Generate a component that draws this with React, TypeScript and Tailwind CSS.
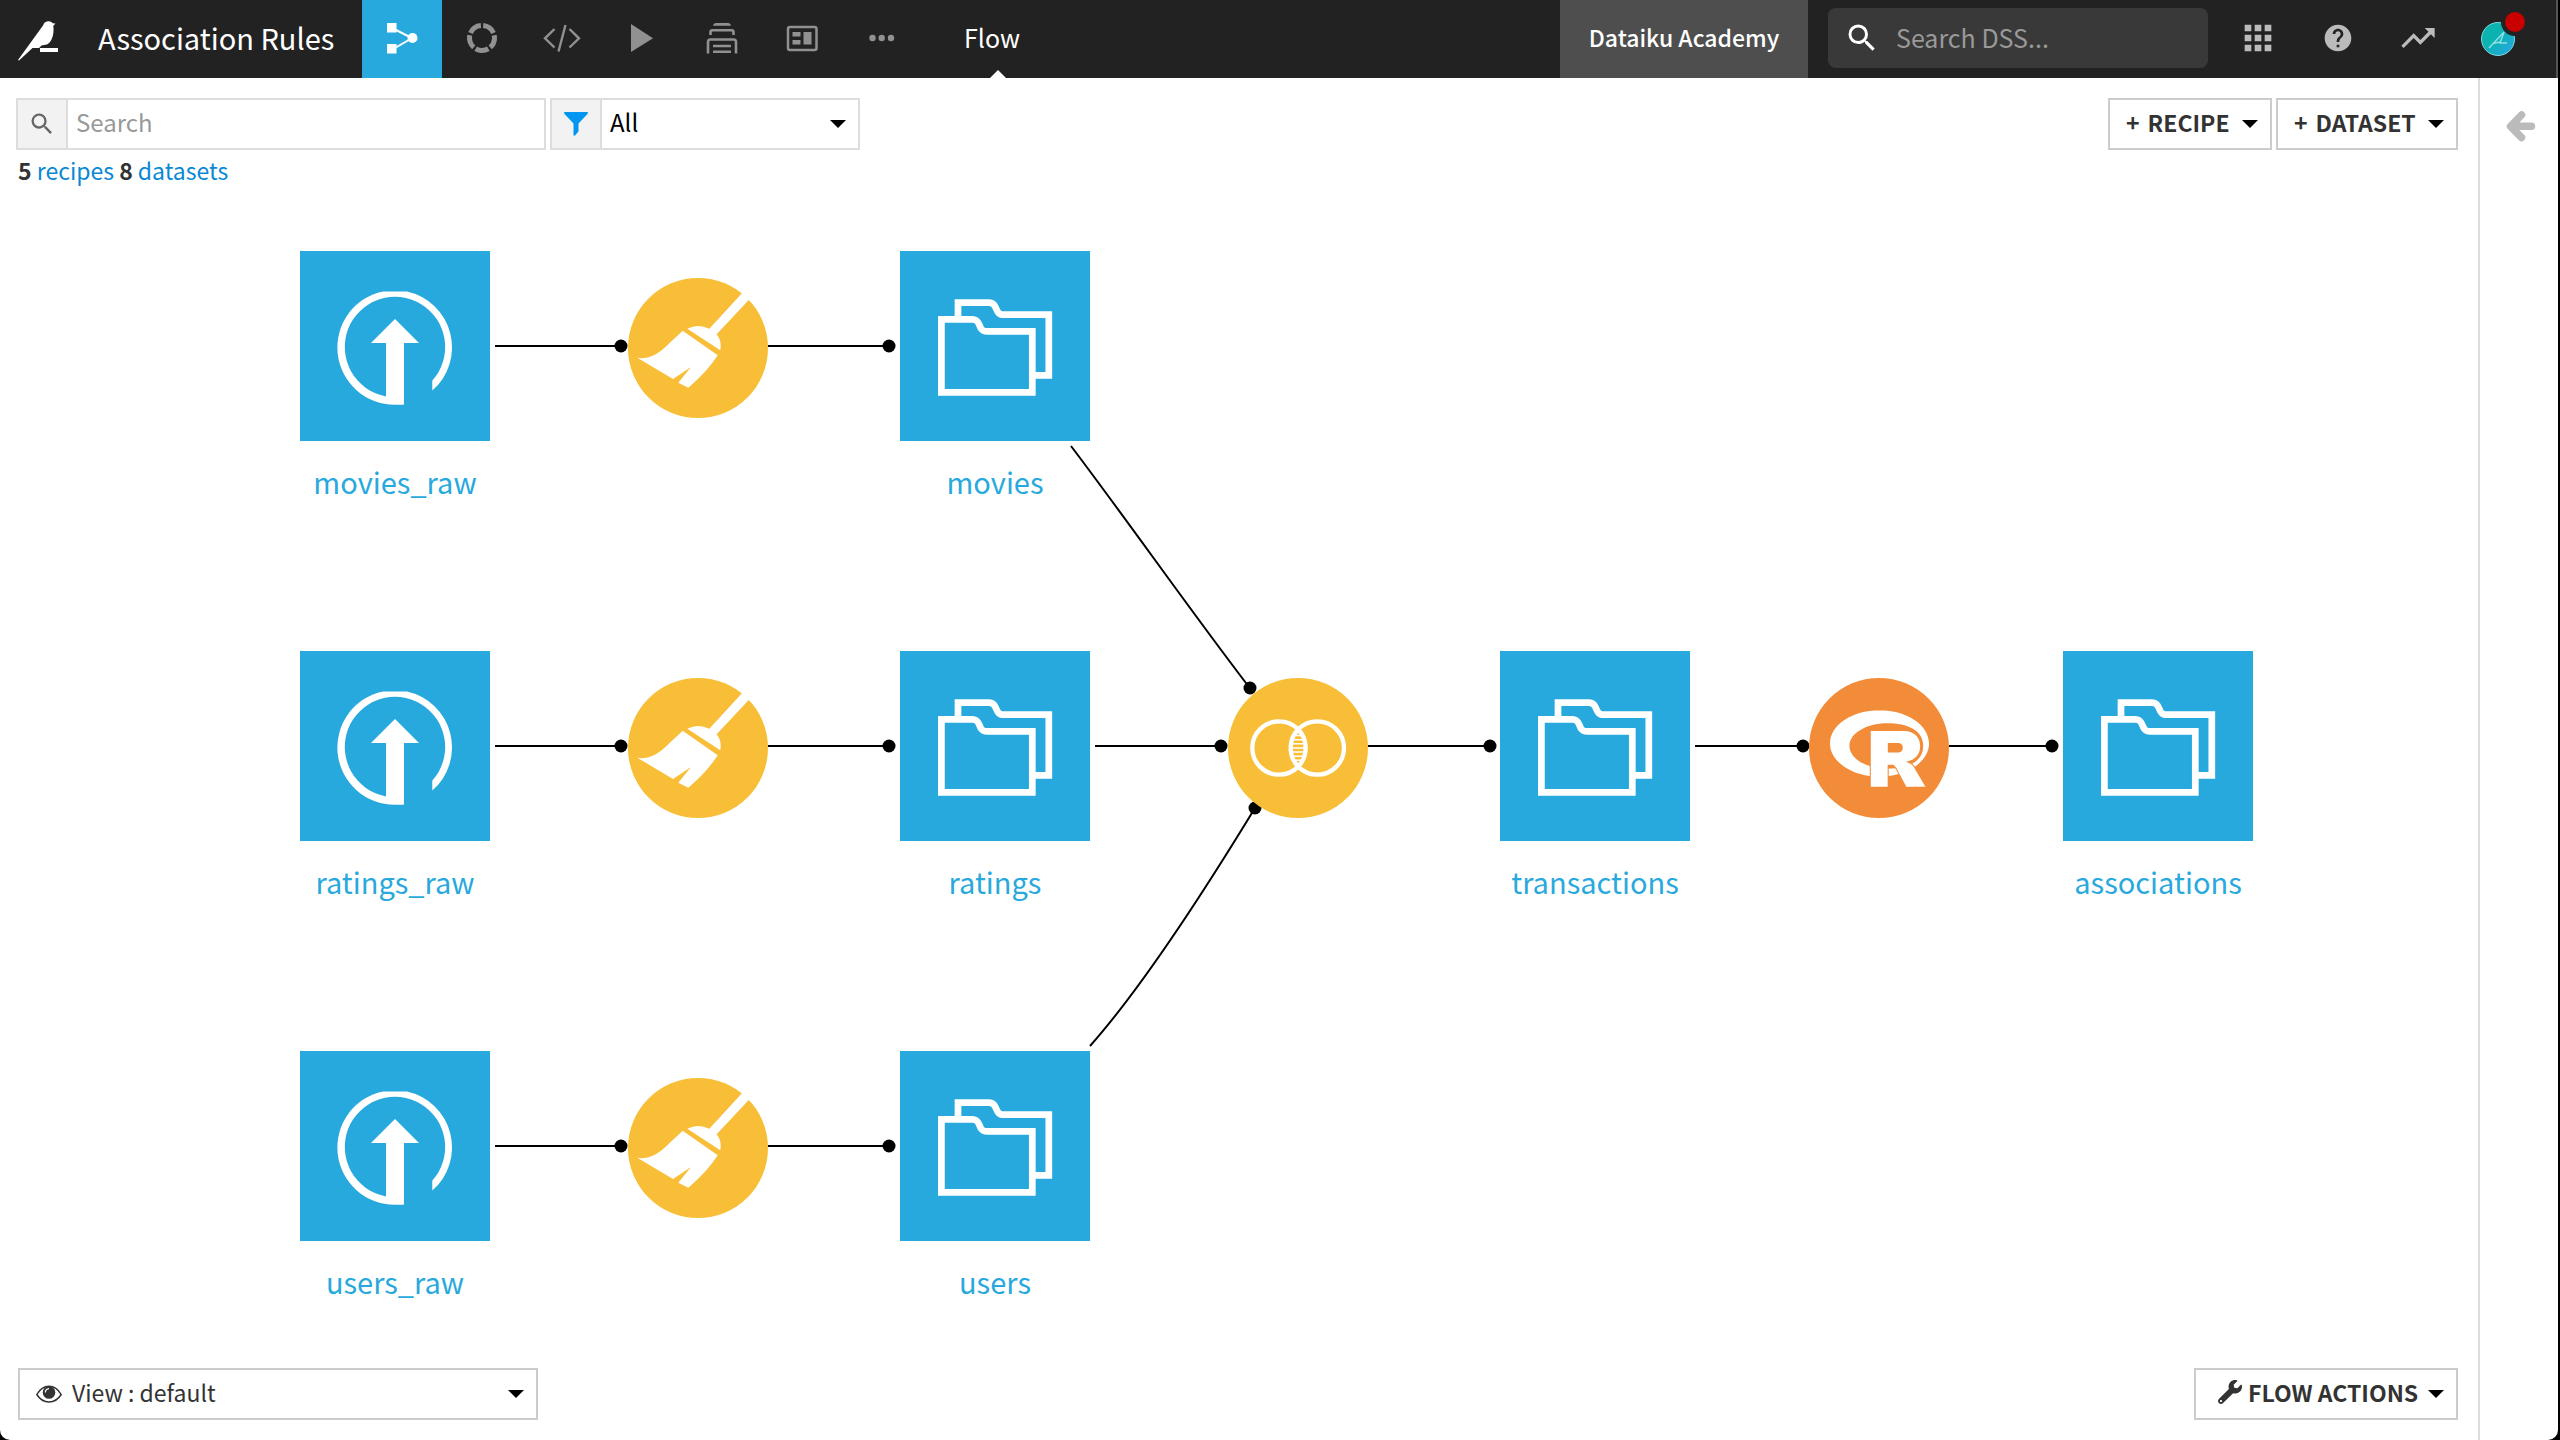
import React from "react";
import { MdApps, MdHelp, MdSearch, MdTrendingUp } from "react-icons/md";
import { FaWrench } from "react-icons/fa";
import { SiR } from "react-icons/si";

type NodeKind = "upload" | "folder";

const datasets: { name: string; kind: NodeKind; x: number; y: number }[] = [
  { name: "movies_raw", kind: "upload", x: 300, y: 61 },
  { name: "ratings_raw", kind: "upload", x: 300, y: 461 },
  { name: "users_raw", kind: "upload", x: 300, y: 861 },
  { name: "movies", kind: "folder", x: 900, y: 61 },
  { name: "ratings", kind: "folder", x: 900, y: 461 },
  { name: "users", kind: "folder", x: 900, y: 861 },
  { name: "transactions", kind: "folder", x: 1500, y: 461 },
  { name: "associations", kind: "folder", x: 2063, y: 461 },
];

const recipes: { id: string; kind: "prepare" | "join" | "r"; x: number; y: number }[] = [
  { id: "Prepare movies", kind: "prepare", x: 628, y: 88 },
  { id: "Prepare ratings", kind: "prepare", x: 628, y: 488 },
  { id: "Prepare users", kind: "prepare", x: 628, y: 888 },
  { id: "Join", kind: "join", x: 1228, y: 488 },
  { id: "R script", kind: "r", x: 1809, y: 488 },
];

const edges: { d: string; end: [number, number] }[] = [
  { d: "M495 156H621", end: [621, 156] },
  { d: "M768 156H889", end: [889, 156] },
  { d: "M495 556H621", end: [621, 556] },
  { d: "M768 556H889", end: [889, 556] },
  { d: "M495 956H621", end: [621, 956] },
  { d: "M768 956H889", end: [889, 956] },
  { d: "M1071 256C1130 334 1190 420 1249 497", end: [1250, 498] },
  { d: "M1095 556H1221", end: [1221, 556] },
  { d: "M1090 856C1145 794 1205 700 1255 618", end: [1255, 618] },
  { d: "M1368 556H1490", end: [1490, 556] },
  { d: "M1695 556H1803", end: [1803, 556] },
  { d: "M1949 556H2052", end: [2052, 556] },
];

const UploadGlyph = () => (
  <svg viewBox="0 0 190 190" className="size-full" fill="#fff" aria-hidden="true">
    <path d="M132.3 139.6A57.3 57.3 0 0 0 107 40.4H83A57.3 57.3 0 0 0 95 153.8H103Q104 153.8 104 152.8V92H119L95 68L71 92H86V145.4A50.2 50.2 0 1 1 132.3 129.6Z" />
  </svg>
);

const FolderGlyph = () => (
  <svg viewBox="0 0 190 190" className="size-full" fill="none" stroke="#fff" strokeWidth="6.7" aria-hidden="true">
    <path d="M41.4 68.4H72C82 68.4 77 80.4 87 80.4H132.3V141.3H41.4Z" />
    <path d="M58 67V51.7H88.7C98.7 51.7 93.7 63.7 103.7 63.7H148.8V124.3H134" />
  </svg>
);

const BroomGlyph = () => (
  <svg viewBox="0 0 140 140" className="size-full" fill="#fff" aria-hidden="true">
    <path d="M81.3 50.7L116 13L123.5 19L88.7 56.3Q94 63 92.3 72.3L59.3 50.7Q70 45.5 81.3 50.7Z" />
    <path d="M54.7 52.7L89.7 77.3Q79 94 60.3 109.7L50.3 104.7L63 89L45 101L9.3 79.7C19 81.5 28 77.5 36 70.3Z" />
  </svg>
);

const JoinGlyph = () => (
  <svg viewBox="0 0 140 140" className="size-full" fill="none" stroke="#fff" aria-hidden="true">
    <circle cx="51" cy="70" r="26.7" strokeWidth="4.3" />
    <circle cx="89.3" cy="70" r="26.7" strokeWidth="4.3" />
    <path d="M67 57.5H73M65.5 61.7H75M65 65.8H75.5M64.5 70H76M65 74H75.5M65.5 78.2H75M67 82.3H73" strokeWidth="1.4" />
  </svg>
);

const Caret = () => (
  <svg viewBox="0 0 16 8" className="w-4 h-2 shrink-0" aria-hidden="true">
    <path d="M0 0H16L8 8Z" />
  </svg>
);

const BirdLogo = () => (
  <svg viewBox="0 0 40 40" className="size-10" fill="#fff" aria-hidden="true">
    <path d="M0 39L25 4.5C26 1.5 28 .3 30.5 .3C33 .3 34 1.3 34.7 2.3L37.5 2.6L35.3 4.8C36 10 35.3 15 33.5 18.5C32 21.5 30.5 23.3 27.5 23.7L23.5 24.5L21 27H14.5L1 39.5Z" />
    <path d="M22 27H40V31H22Z" />
  </svg>
);

const FlowIcon = () => (
  <svg viewBox="0 0 32 32" className="size-8" fill="#fff" aria-hidden="true">
    <path d="M1 1H10.5V10.5H1ZM1 22H10.5V31.5H1Z" />
    <circle cx="26.5" cy="16" r="5" />
    <path d="M9 7.5L26 16L9 26" fill="none" stroke="#fff" strokeWidth="2" />
  </svg>
);

const RingIcon = () => (
  <svg viewBox="0 0 32 32" className="size-8" aria-hidden="true">
    <circle cx="16" cy="16" r="12.5" fill="none" stroke="currentColor" strokeWidth="5" pathLength="100" strokeDasharray="17 3" transform="rotate(-84.6 16 16)" />
  </svg>
);

const CodeIcon = () => (
  <svg viewBox="0 0 40 32" className="w-10 h-8" fill="none" stroke="currentColor" strokeWidth="2.4" aria-hidden="true">
    <path d="M12.5 7L3 16.3L12.5 25.5M27.5 7L37 16.3L27.5 25.5M23.5 3L16.5 29.5" />
  </svg>
);

const PlayIcon = () => (
  <svg viewBox="0 0 32 32" className="size-8" fill="currentColor" aria-hidden="true">
    <path d="M5 2L27 16.2L5 30Z" />
  </svg>
);

const JobsIcon = () => (
  <svg viewBox="0 0 32 32" className="size-8" fill="none" stroke="currentColor" strokeWidth="2.6" aria-hidden="true">
    <path d="M7 3.8Q7.5 1 10 1H22Q24.5 1 25 3.8Z" fill="currentColor" stroke="none" />
    <path d="M4.500 13V10Q4.500 8.300 6.500 8.300H25.500Q27.500 8.300 27.500 10V13M2 31.500V20Q2 17.500 4.500 17.500H27.500Q30 17.500 30 20V31.500M7 24H25M7 29.800H25" />
  </svg>
);

const DashboardIcon = () => (
  <svg viewBox="0 0 32 32" className="size-8" aria-hidden="true">
    <rect x="2" y="5" width="28.5" height="23" rx="2" fill="none" stroke="currentColor" strokeWidth="2.5" />
    <path d="M6.5 10H14.5V14.5H6.5ZM6.5 18H14.5V22.5H6.5ZM17.5 10H25.5V22.5H17.5Z" fill="currentColor" />
  </svg>
);

const DotsIcon = () => (
  <svg viewBox="0 0 32 32" className="size-8" fill="currentColor" aria-hidden="true">
    <circle cx="6.5" cy="16" r="3.2" />
    <circle cx="15.7" cy="16" r="3.2" />
    <circle cx="25" cy="16" r="3.2" />
  </svg>
);

const FilterIcon = () => (
  <svg viewBox="0 0 24 24" className="size-6" fill="#0096f2" aria-hidden="true">
    <path d="M.5 0H23.5Q24.3 1 23.5 2L14.5 11.5V19.5L11 23.5Q9.5 24.5 9.5 22.5V11.5L.5 2Q-.3 1 .5 0Z" />
  </svg>
);

const EyeIcon = () => (
  <svg viewBox="0 0 26 18" className="w-[26px] h-[18px]" aria-hidden="true">
    <path d="M.8 9.5Q5.5 1.2 13 1.2T25.2 9.5Q20.5 17 13 17T.8 9.5Z" fill="none" stroke="#333" strokeWidth="1.5" />
    <circle cx="13" cy="7.5" r="6.3" fill="#333" />
    <path d="M9.3 7.5Q9.5 4 13 3.6" fill="none" stroke="#fff" strokeWidth="1.2" />
  </svg>
);

const Avatar = () => (
  <svg viewBox="0 0 48 48" className="size-12" aria-hidden="true">
    <defs>
      <linearGradient id="avatar" x1="0" y1="0" x2="1" y2="1">
        <stop offset="0.4" stopColor="#0ab3b0" />
        <stop offset="1" stopColor="#2aa6e8" />
      </linearGradient>
    </defs>
    <circle cx="18" cy="28" r="16.5" fill="url(#avatar)" stroke="#7fd6dc" />
    <path d="M9 37L24 21L20 32H27M13 32.5L20 31" fill="none" stroke="#8be0e0" strokeWidth="1.5" />
    <circle cx="35" cy="11" r="14" fill="#222" />
    <circle cx="35" cy="11" r="10" fill="#c80000" />
  </svg>
);

const navItems = [
  { label: "Recipes", icon: <RingIcon /> },
  { label: "Notebooks", icon: <CodeIcon /> },
  { label: "Jobs", icon: <PlayIcon /> },
  { label: "Automation", icon: <JobsIcon /> },
  { label: "Dashboards", icon: <DashboardIcon /> },
  { label: "More", icon: <DotsIcon /> },
];

const Header = () => (
  <header className="flex h-[78px] items-stretch bg-[#222] border-r-2 border-[#555] text-white">
    <a href="#" aria-label="Home" className="flex items-center pl-[18px] pt-1">
      <BirdLogo />
    </a>
    <a href="#" className="flex w-[304px] items-center pb-1 pl-10 text-[29px] leading-8 whitespace-nowrap">
      Association Rules
    </a>
    <nav className="flex items-stretch text-[#919191]">
      <button aria-label="Flow" className="flex w-20 items-center justify-center bg-[#28a9dd] pb-0.5">
        <FlowIcon />
      </button>
      {navItems.map((item) => (
        <button key={item.label} aria-label={item.label} className="flex w-20 items-center justify-center pb-0.5">
          {item.icon}
        </button>
      ))}
    </nav>
    <a href="#" className="relative flex w-[152px] items-center justify-center pr-3 pb-1 text-[25px] leading-8">
      Flow
      <svg viewBox="0 0 16 8" className="absolute bottom-0 left-1/2 -ml-2 w-4 h-2" fill="#fff" aria-hidden="true">
        <path d="M0 8L8 0L16 8Z" />
      </svg>
    </a>
    <div className="ml-auto flex items-stretch">
      <a href="#" className="flex w-[248px] items-center justify-center bg-[#4e4e4e] pb-1 text-[23px] font-medium whitespace-nowrap">
        Dataiku Academy
      </a>
      <label className="mx-5 my-2 flex h-[60px] w-[380px] items-center self-start rounded-lg bg-[#393939] pl-4">
        <MdSearch size={36} />
        <input
          type="text"
          aria-label="Search DSS"
          placeholder="Search DSS..."
          className="ml-4 w-72 bg-transparent pb-0.5 text-[25px] leading-8 outline-none placeholder:text-[#999]"
        />
      </label>
      <div className="flex items-center pb-0.5 text-[#bbb]">
        <button aria-label="Applications" className="flex w-[60px] justify-center"><MdApps size={40} /></button>
        <button aria-label="Help" className="ml-5 flex w-[60px] justify-center"><MdHelp size={32} /></button>
        <button aria-label="Activity" className="ml-5 flex w-[60px] justify-center"><MdTrendingUp size={40} /></button>
      </div>
      <button aria-label="Profile" className="mr-7 ml-8 flex items-center pb-2"><Avatar /></button>
    </div>
  </header>
);

const Toolbar = () => (
  <div className="flex items-start justify-between pt-5 pr-5 pb-0.5 pl-4">
    <div>
      <div className="flex gap-1">
        <label className="flex h-[52px] w-[530px] border-2 border-[#ddd]">
          <span className="flex w-[50px] items-center justify-center border-r-2 border-[#ddd] bg-[#f2f2f2] text-[#666]">
            <MdSearch size={28} />
          </span>
          <input
            type="text"
            aria-label="Search"
            placeholder="Search"
            className="min-w-0 flex-1 px-2 pb-1 text-2xl outline-none placeholder:text-[#999]"
          />
        </label>
        <div className="flex h-[52px] w-[310px] border-2 border-[#ddd]">
          <span className="flex w-[50px] items-center justify-center border-r-2 border-[#ddd] bg-[#f2f2f2]">
            <FilterIcon />
          </span>
          <div className="relative flex flex-1 items-center">
            <select aria-label="Filter" className="h-full w-full appearance-none px-2 pb-1 text-2xl outline-none">
              <option>All</option>
            </select>
            <span className="pointer-events-none absolute right-3"><Caret /></span>
          </div>
        </div>
      </div>
      <p className="mt-0.5 pl-0.5 text-[23px] leading-9 text-[#333]">
        <b>5</b> <a href="#" className="text-[#0a88d6]">recipes</a> <b>8</b>{" "}
        <a href="#" className="text-[#0a88d6]">datasets</a>
      </p>
    </div>
    <div className="flex gap-1 text-[23px] font-bold text-[#333]">
      <button className="flex h-[52px] w-[164px] items-center justify-between border-2 border-[#ccc] px-3">
        <span className="flex gap-2 pb-1 pl-1"><span>+</span>RECIPE</span> <Caret />
      </button>
      <button className="flex h-[52px] w-[182px] items-center justify-between border-2 border-[#ccc] px-3">
        <span className="flex gap-2 pb-1 pl-1"><span>+</span>DATASET</span> <Caret />
      </button>
    </div>
  </div>
);

const Flow = () => (
  <div className="relative flex-1">
    <svg className="absolute inset-0 size-full" aria-hidden="true">
      {edges.map((edge) => (
        <g key={edge.d}>
          <path d={edge.d} fill="none" stroke="#000" strokeWidth="2" />
          <circle cx={edge.end[0]} cy={edge.end[1]} r="6.5" />
        </g>
      ))}
    </svg>
    {datasets.map((node) => (
      <a
        key={node.name}
        href="#"
        className="absolute flex w-[190px] flex-col items-center text-[#28a9dd]"
        style={{ left: node.x, top: node.y }}
      >
        <span className="size-[190px] bg-[#28a9dd]">
          {node.kind === "upload" ? <UploadGlyph /> : <FolderGlyph />}
        </span>
        <span className="mt-5 text-[29px] leading-10 whitespace-nowrap">{node.name}</span>
      </a>
    ))}
    {recipes.map((node) => (
      <button
        key={node.id}
        aria-label={node.id}
        className={
          "absolute flex size-[140px] items-center justify-center rounded-full text-white " +
          (node.kind === "r" ? "bg-[#f28c38]" : "bg-[#f9be38]")
        }
        style={{ left: node.x, top: node.y }}
      >
        {node.kind === "prepare" && <BroomGlyph />}
        {node.kind === "join" && <JoinGlyph />}
        {node.kind === "r" && <SiR size={99} />}
      </button>
    ))}
  </div>
);

const BottomBar = () => (
  <div className="flex justify-between pr-5 pb-5 pl-[18px] text-[#333]">
    <div className="relative flex h-[52px] w-[520px] items-center border-2 border-[#ccc]">
      <span className="pointer-events-none absolute left-4"><EyeIcon /></span>
      <select aria-label="View" className="h-full w-full appearance-none pr-10 pb-1 pl-[52px] text-[23px] outline-none">
        <option>View : default</option>
      </select>
      <span className="pointer-events-none absolute right-3"><Caret /></span>
    </div>
    <button className="flex h-[52px] w-[264px] items-center justify-between border-2 border-[#ccc] pr-3 pl-[22px] text-[23px] font-bold">
      <span className="flex items-center gap-1.5 pb-1 whitespace-nowrap"><FaWrench size={24} /> FLOW ACTIONS</span>
      <Caret />
    </button>
  </div>
);

export default function App() {
  return (
    <div className="bg-black pr-0.5 font-['Noto_Sans_CJK_SC',sans-serif]">
      <div className="flex min-h-screen flex-col overflow-hidden rounded-b-[10px] bg-white">
        <Header />
        <div className="flex flex-1">
          <main className="flex flex-1 flex-col">
            <Toolbar />
            <Flow />
            <BottomBar />
          </main>
          <aside className="w-20 border-l-2 border-[#ddd]">
            <button aria-label="Open panel" className="mt-8 ml-6 flex">
              <svg viewBox="0 0 34 34" className="size-[34px]" fill="none" stroke="#bbb" strokeWidth="7.5" strokeLinecap="round" strokeLinejoin="round" aria-hidden="true">
                <path d="M17.5 5L6.5 16.3L17.5 27.5M8 16.3H27.5" />
              </svg>
            </button>
          </aside>
        </div>
      </div>
    </div>
  );
}
